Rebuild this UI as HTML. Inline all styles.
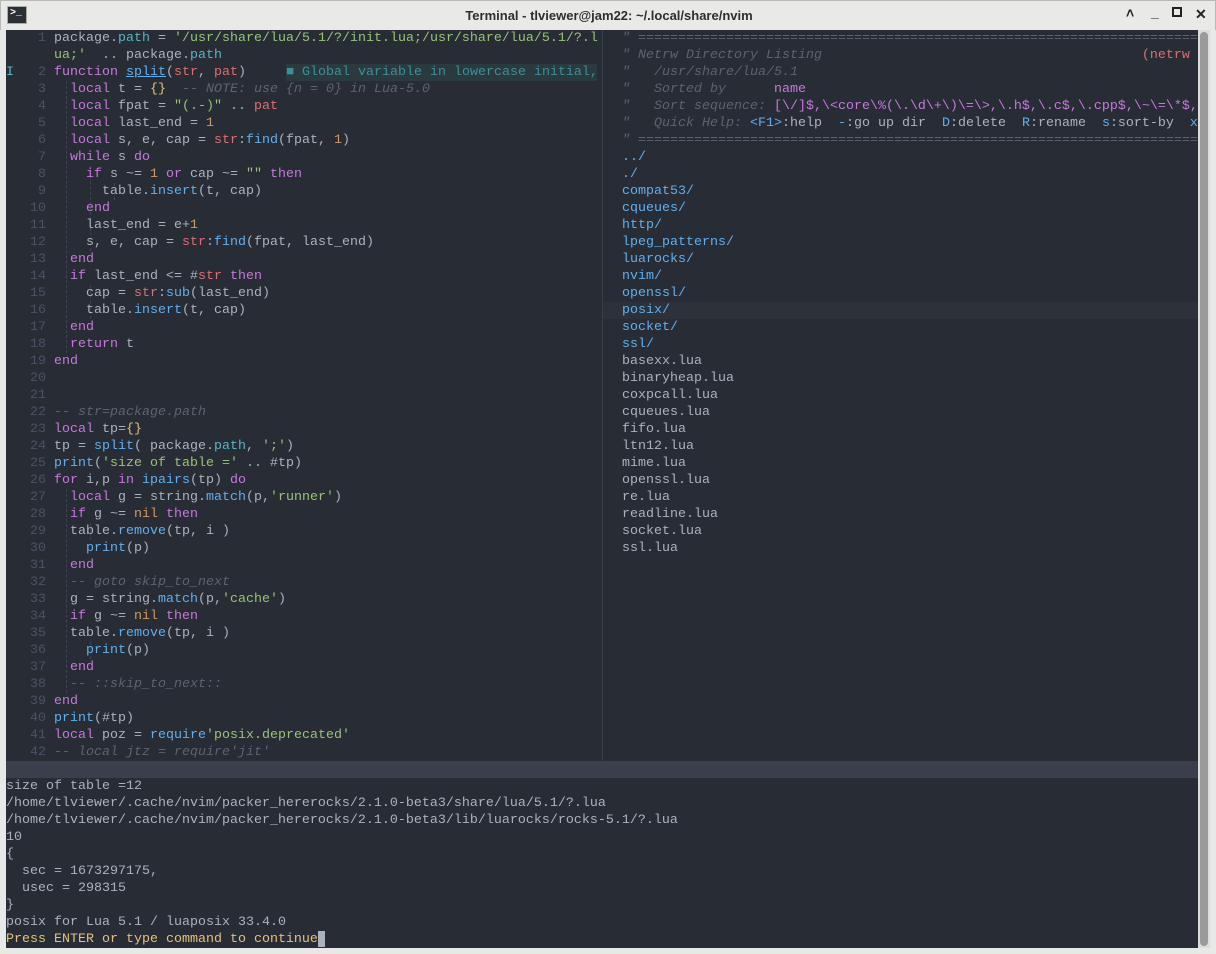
<!DOCTYPE html>
<html><head><meta charset="utf-8"><style>
*{margin:0;padding:0;box-sizing:border-box}
body{width:1216px;height:954px;background:#e8e8e7;overflow:hidden;position:relative;font-family:"Liberation Mono",monospace}
#title{position:absolute;left:0;top:0;width:1216px;height:30px;background:#e9e9e8;border:1px solid #b8b8b8;border-bottom:none}
#title .t{position:absolute;left:0;width:1216px;top:7px;text-align:center;font:bold 13px "Liberation Sans",sans-serif;color:#2e2e2e}
#icon{position:absolute;left:6px;top:5px;width:20px;height:18px;background:#2b3035;border:1px solid #aaa;color:#fff;font:bold 10px "Liberation Mono",monospace;padding:1px 2px}
.wb{position:absolute;top:5px;font:bold 14px "Liberation Sans",sans-serif;color:#222}
#term{position:absolute;left:6px;top:30px;width:1204px;height:918px;background:#282c34}
#sb{position:absolute;left:1198px;top:30px;width:12px;height:918px;background:#dcdcdc}
#sb div{position:absolute;left:2px;top:2px;width:8px;height:914px;background:#9a9a9a;border-radius:4px}
.r{position:absolute;height:17px;line-height:17px;font-size:13.33px;white-space:pre;color:#abb2bf}
.n{color:#4b5263}
.k{color:#c678dd}.s{color:#98c379}.f{color:#61afef}.v{color:#e06c75}.o{color:#d19a66}.c{color:#5c6370;font-style:italic}.y{color:#e5c07b}.cy{color:#56b6c2}
.g{position:absolute;width:0;border-left:1px dashed #3e4452}
</style></head><body>
<div id="title"><div id="icon">&gt;_</div><div class="t">Terminal - tlviewer@jam22: ~/.local/share/nvim</div>
<div class="wb" style="left:1125px;top:4px">&#708;</div><div class="wb" style="left:1150px;top:3px">_</div><div class="wb" style="left:1171px;top:6px;width:10px;height:10px;border:2px solid #222"></div><div class="wb" style="left:1194px;top:5px">&#10005;</div></div>
<div id="term"></div>
<div id="sb"><div></div></div>
<div style="position:absolute;left:602px;top:30px;width:1px;height:731px;background:#3b4048"></div>
<div style="position:absolute;left:603px;top:302px;width:595px;height:17px;background:#2c313a"></div>
<div style="position:absolute;left:6px;top:761px;width:1192px;height:17px;background:#3a3f4b"></div>
<div style="position:absolute;left:286px;top:64px;width:311px;height:17px;background:#2a3a3e"></div>
<div class="g" style="left:66px;top:81px;height:272px"></div>
<div class="g" style="left:90px;top:166px;height:85px"></div>
<div class="g" style="left:114px;top:183px;height:17px"></div>
<div class="g" style="left:90px;top:285px;height:34px"></div>
<div class="g" style="left:66px;top:489px;height:204px"></div>
<div class="g" style="left:90px;top:523px;height:17px"></div>
<div class="g" style="left:90px;top:642px;height:17px"></div>
<div id="L">
<div class="r" style="left:6px;top:30px"><span class="n">    1 </span>package.<span class="cy">path</span> = <span class="s">'/usr/share/lua/5.1/?/init.lua;/usr/share/lua/5.1/?.l</span></div>
<div class="r" style="left:6px;top:47px">      <span class="s">ua;'</span>  .. package.<span class="cy">path</span></div>
<div class="r" style="left:6px;top:64px"><span class="cy">I</span><span class="n">   2 </span><span class="k">function</span> <span class="f" style="text-decoration:underline">split</span>(<span class="v">str</span>, <span class="v">pat</span>)     <span style="color:#3e8f99">■ Global variable in lowercase initial,</span></div>
<div class="r" style="left:6px;top:81px"><span class="n">    3 </span>  <span class="k">local</span> t = <span class="y">{}</span>  <span class="c">-- NOTE: use {n = 0} in Lua-5.0</span></div>
<div class="r" style="left:6px;top:98px"><span class="n">    4 </span>  <span class="k">local</span> fpat = <span class="s">"(.-)"</span> .. <span class="v">pat</span></div>
<div class="r" style="left:6px;top:115px"><span class="n">    5 </span>  <span class="k">local</span> last_end = <span class="o">1</span></div>
<div class="r" style="left:6px;top:132px"><span class="n">    6 </span>  <span class="k">local</span> s, e, cap = <span class="v">str</span>:<span class="f">find</span>(fpat, <span class="o">1</span>)</div>
<div class="r" style="left:6px;top:149px"><span class="n">    7 </span>  <span class="k">while</span> s <span class="k">do</span></div>
<div class="r" style="left:6px;top:166px"><span class="n">    8 </span>    <span class="k">if</span> s ~= <span class="o">1</span> <span class="k">or</span> cap ~= <span class="s">""</span> <span class="k">then</span></div>
<div class="r" style="left:6px;top:183px"><span class="n">    9 </span>      table.<span class="f">insert</span>(t, cap)</div>
<div class="r" style="left:6px;top:200px"><span class="n">   10 </span>    <span class="k">end</span></div>
<div class="r" style="left:6px;top:217px"><span class="n">   11 </span>    last_end = e+<span class="o">1</span></div>
<div class="r" style="left:6px;top:234px"><span class="n">   12 </span>    s, e, cap = <span class="v">str</span>:<span class="f">find</span>(fpat, last_end)</div>
<div class="r" style="left:6px;top:251px"><span class="n">   13 </span>  <span class="k">end</span></div>
<div class="r" style="left:6px;top:268px"><span class="n">   14 </span>  <span class="k">if</span> last_end &lt;= #<span class="v">str</span> <span class="k">then</span></div>
<div class="r" style="left:6px;top:285px"><span class="n">   15 </span>    cap = <span class="v">str</span>:<span class="f">sub</span>(last_end)</div>
<div class="r" style="left:6px;top:302px"><span class="n">   16 </span>    table.<span class="f">insert</span>(t, cap)</div>
<div class="r" style="left:6px;top:319px"><span class="n">   17 </span>  <span class="k">end</span></div>
<div class="r" style="left:6px;top:336px"><span class="n">   18 </span>  <span class="k">return</span> t</div>
<div class="r" style="left:6px;top:353px"><span class="n">   19 </span><span class="k">end</span></div>
<div class="r" style="left:6px;top:370px"><span class="n">   20 </span></div>
<div class="r" style="left:6px;top:387px"><span class="n">   21 </span></div>
<div class="r" style="left:6px;top:404px"><span class="n">   22 </span><span class="c">-- str=package.path</span></div>
<div class="r" style="left:6px;top:421px"><span class="n">   23 </span><span class="k">local</span> tp=<span class="y">{}</span></div>
<div class="r" style="left:6px;top:438px"><span class="n">   24 </span>tp = <span class="f">split</span>( package.<span class="cy">path</span>, <span class="s">';'</span>)</div>
<div class="r" style="left:6px;top:455px"><span class="n">   25 </span><span class="f">print</span>(<span class="s">'size of table ='</span> .. #tp)</div>
<div class="r" style="left:6px;top:472px"><span class="n">   26 </span><span class="k">for</span> i,p <span class="k">in</span> <span class="f">ipairs</span>(tp) <span class="k">do</span></div>
<div class="r" style="left:6px;top:489px"><span class="n">   27 </span>  <span class="k">local</span> g = string.<span class="f">match</span>(p,<span class="s">'runner'</span>)</div>
<div class="r" style="left:6px;top:506px"><span class="n">   28 </span>  <span class="k">if</span> g ~= <span class="o">nil</span> <span class="k">then</span></div>
<div class="r" style="left:6px;top:523px"><span class="n">   29 </span>  table.<span class="f">remove</span>(tp, i )</div>
<div class="r" style="left:6px;top:540px"><span class="n">   30 </span>    <span class="f">print</span>(p)</div>
<div class="r" style="left:6px;top:557px"><span class="n">   31 </span>  <span class="k">end</span></div>
<div class="r" style="left:6px;top:574px"><span class="n">   32 </span>  <span class="c">-- goto skip_to_next</span></div>
<div class="r" style="left:6px;top:591px"><span class="n">   33 </span>  g = string.<span class="f">match</span>(p,<span class="s">'cache'</span>)</div>
<div class="r" style="left:6px;top:608px"><span class="n">   34 </span>  <span class="k">if</span> g ~= <span class="o">nil</span> <span class="k">then</span></div>
<div class="r" style="left:6px;top:625px"><span class="n">   35 </span>  table.<span class="f">remove</span>(tp, i )</div>
<div class="r" style="left:6px;top:642px"><span class="n">   36 </span>    <span class="f">print</span>(p)</div>
<div class="r" style="left:6px;top:659px"><span class="n">   37 </span>  <span class="k">end</span></div>
<div class="r" style="left:6px;top:676px"><span class="n">   38 </span>  <span class="c">-- ::skip_to_next::</span></div>
<div class="r" style="left:6px;top:693px"><span class="n">   39 </span><span class="k">end</span></div>
<div class="r" style="left:6px;top:710px"><span class="n">   40 </span><span class="f">print</span>(#tp)</div>
<div class="r" style="left:6px;top:727px"><span class="n">   41 </span><span class="k">local</span> poz = <span class="f">require</span><span class="s">'posix.deprecated'</span></div>
<div class="r" style="left:6px;top:744px"><span class="n">   42 </span><span class="c">-- local jtz = require'jit'</span></div>
</div>
<div style="position:absolute;left:622px;top:30px;width:576px;height:731px;overflow:hidden">
<div class="r c" style="left:0;top:0">" ==========================================================================</div>
<div class="r" style="left:0;top:17px"><span class="c">" Netrw Directory Listing</span>                                        <span class="v">(netrw</span></div>
<div class="r c" style="left:0;top:34px">"   /usr/share/lua/5.1</div>
<div class="r" style="left:0;top:51px"><span class="c">"   Sorted by      </span><span class="k">name</span></div>
<div class="r" style="left:0;top:68px"><span class="c">"   Sort sequence: </span><span class="k">[\/]$,\&lt;core\%(\.\d\+\)\=\&gt;,\.h$,\.c$,\.cpp$,\~\=\*$,</span></div>
<div class="r" style="left:0;top:85px"><span class="c">"   Quick Help: </span><span class="f">&lt;F1&gt;</span>:help  <span class="f">-</span>:go up dir  <span class="f">D</span>:delete  <span class="f">R</span>:rename  <span class="f">s</span>:sort-by  <span class="f">x</span></div>
<div class="r c" style="left:0;top:102px">" ==========================================================================</div>
<div class="r f" style="left:0;top:119px">../</div>
<div class="r f" style="left:0;top:136px">./</div>
<div class="r f" style="left:0;top:153px">compat53/</div>
<div class="r f" style="left:0;top:170px">cqueues/</div>
<div class="r f" style="left:0;top:187px">http/</div>
<div class="r f" style="left:0;top:204px">lpeg_patterns/</div>
<div class="r f" style="left:0;top:221px">luarocks/</div>
<div class="r f" style="left:0;top:238px">nvim/</div>
<div class="r f" style="left:0;top:255px">openssl/</div>
<div class="r f" style="left:0;top:272px">posix/</div>
<div class="r f" style="left:0;top:289px">socket/</div>
<div class="r f" style="left:0;top:306px">ssl/</div>
<div class="r" style="left:0;top:323px">basexx.lua</div>
<div class="r" style="left:0;top:340px">binaryheap.lua</div>
<div class="r" style="left:0;top:357px">coxpcall.lua</div>
<div class="r" style="left:0;top:374px">cqueues.lua</div>
<div class="r" style="left:0;top:391px">fifo.lua</div>
<div class="r" style="left:0;top:408px">ltn12.lua</div>
<div class="r" style="left:0;top:425px">mime.lua</div>
<div class="r" style="left:0;top:442px">openssl.lua</div>
<div class="r" style="left:0;top:459px">re.lua</div>
<div class="r" style="left:0;top:476px">readline.lua</div>
<div class="r" style="left:0;top:493px">socket.lua</div>
<div class="r" style="left:0;top:510px">ssl.lua</div>
</div>
<div class="r" style="left:6px;top:778px">size of table =12</div>
<div class="r" style="left:6px;top:795px">/home/tlviewer/.cache/nvim/packer_hererocks/2.1.0-beta3/share/lua/5.1/?.lua</div>
<div class="r" style="left:6px;top:812px">/home/tlviewer/.cache/nvim/packer_hererocks/2.1.0-beta3/lib/luarocks/rocks-5.1/?.lua</div>
<div class="r" style="left:6px;top:829px">10</div>
<div class="r" style="left:6px;top:846px">{</div>
<div class="r" style="left:6px;top:863px">  sec = 1673297175,</div>
<div class="r" style="left:6px;top:880px">  usec = 298315</div>
<div class="r" style="left:6px;top:897px">}</div>
<div class="r" style="left:6px;top:914px">posix for Lua 5.1 / luaposix 33.4.0</div>
<div class="r" style="left:6px;top:931px;color:#e5c07b">Press ENTER or type command to continue<span style="background:#abb2bf;display:inline-block;width:7px;height:16px;vertical-align:top"></span></div>
</body></html>
